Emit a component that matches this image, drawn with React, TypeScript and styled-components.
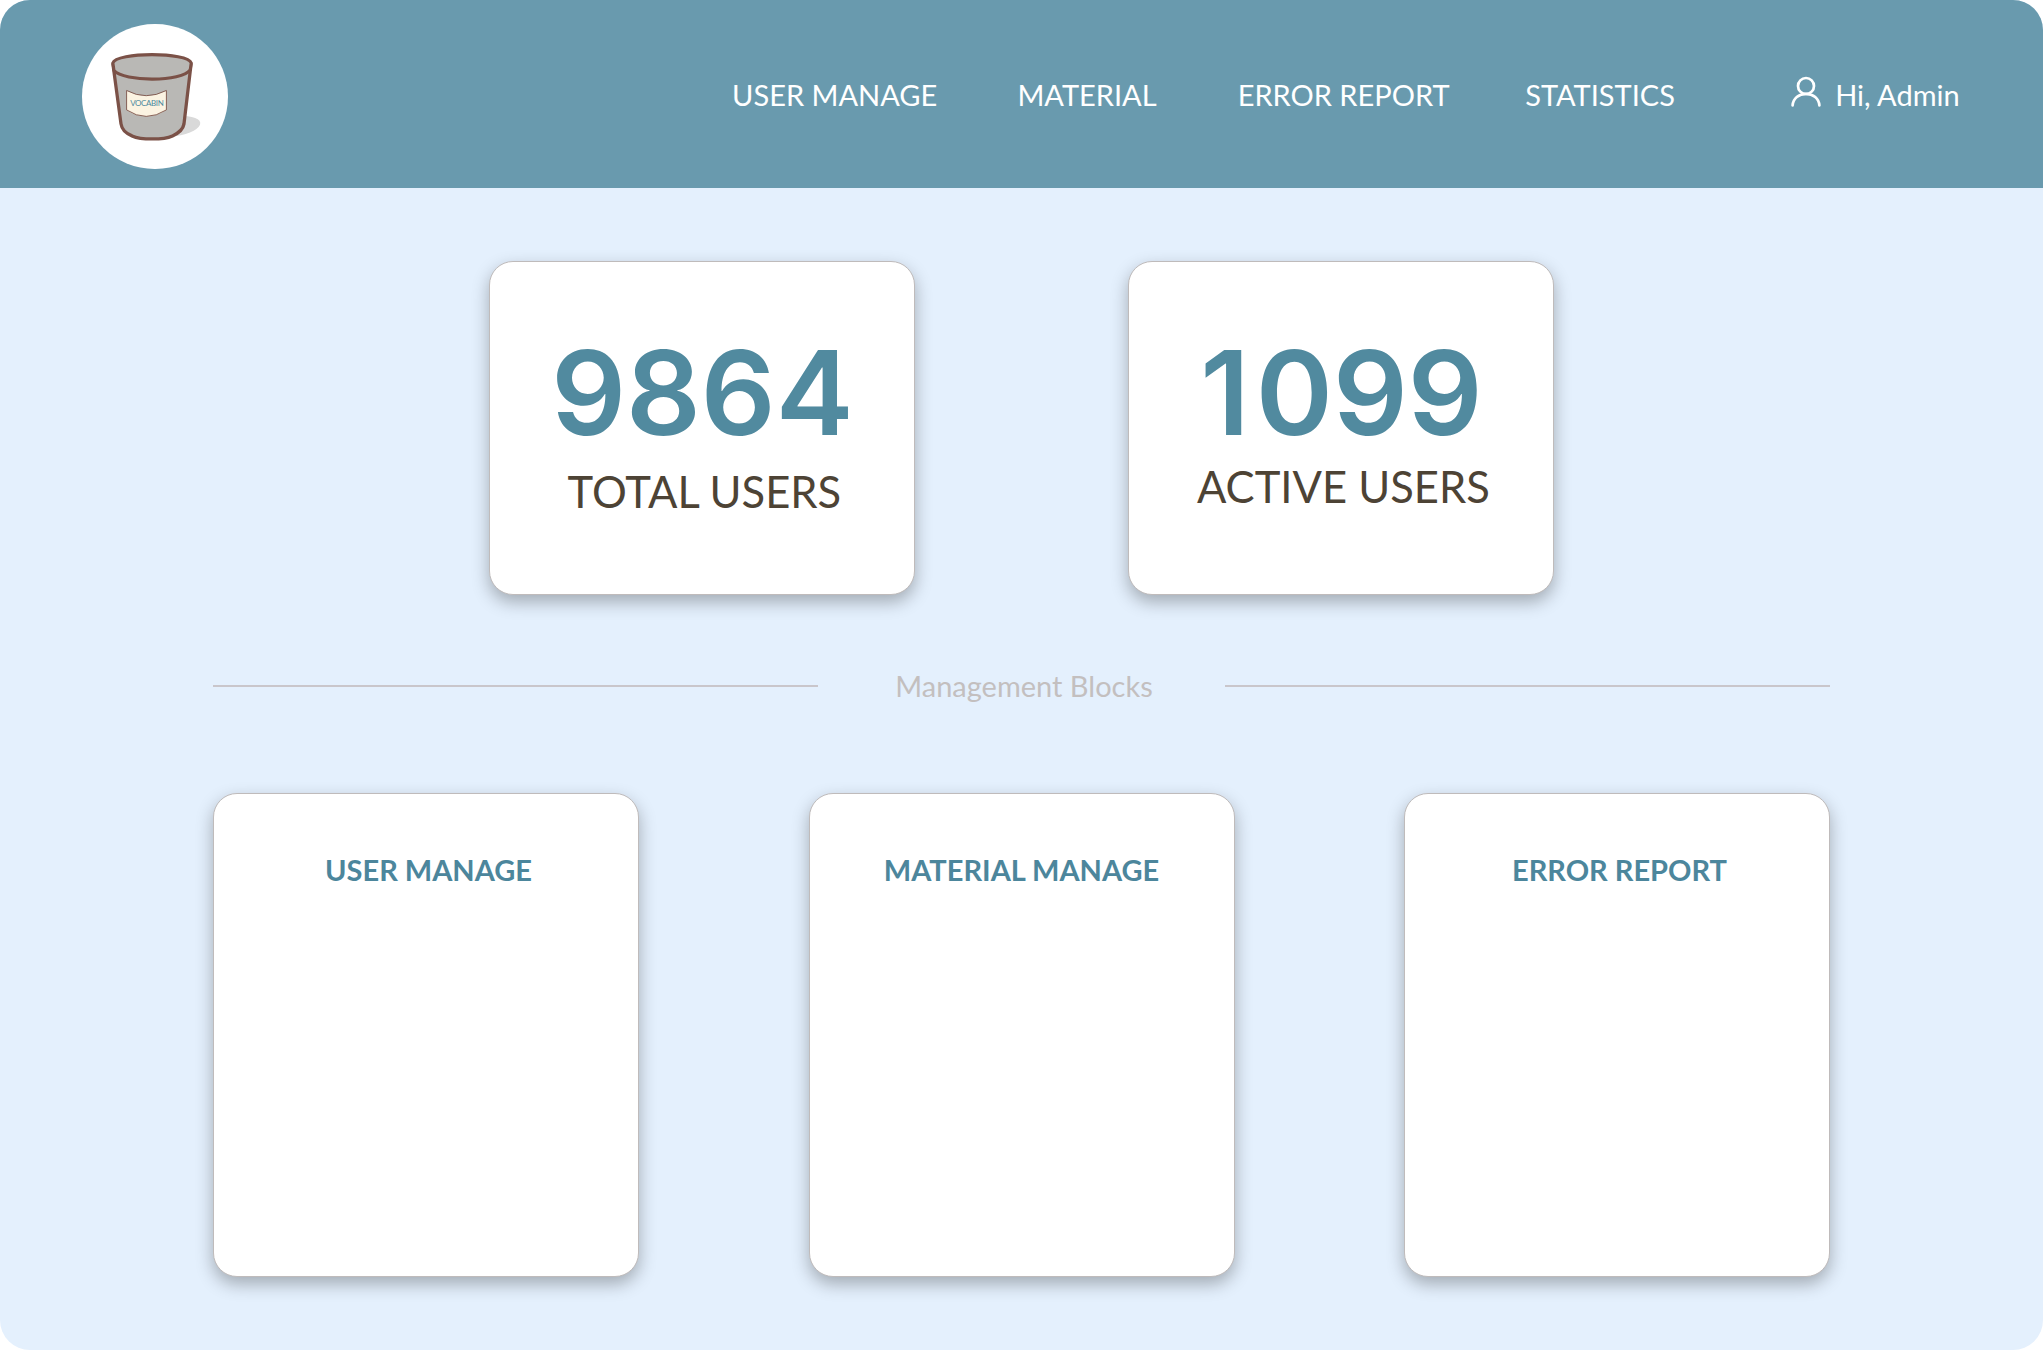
import React from "react";
import styled, { createGlobalStyle } from "styled-components";

const GlobalStyle = createGlobalStyle`
  *, *::before, *::after { box-sizing: border-box; }
  body { margin: 0; background: #fff; }
`;

const Page = styled.div`
  width: 2043px;
  height: 1350px;
  display: flex;
  flex-direction: column;
  background: #e4f0fd;
  border-radius: 30px;
  overflow: hidden;
  font-family: Lato, "Liberation Sans", sans-serif;
`;

const Header = styled.header`
  flex: none;
  height: 188.4px;
  display: flex;
  align-items: center;
  padding: 4px 0 0 82.3px;
  background: #699aae;
`;

const LogoLink = styled.a`
  width: 145.4px;
  height: 145.4px;
  border-radius: 50%;
  background: #fff;
  display: block;
`;

const Nav = styled.nav`
  display: grid;
  grid-template-columns: 285.3px 220.3px 287.5px 200px;
  margin-left: 504.4px;
`;

const NavItem = styled.a`
  color: #fff;
  font-size: 29px;
  line-height: 36px;
  margin: -1px 0 2px;
  white-space: nowrap;
`;

const Account = styled.div`
  display: flex;
  align-items: center;
  margin-left: 65px;
  gap: 13px;
`;

const UserIcon = styled.svg`
  width: 32px;
  height: 32px;
  margin-top: -9px;
`;

const Main = styled.main`
  flex: 1;
  display: flex;
  flex-direction: column;
  padding: 73px 213px 0;
`;

const Card = styled.section<{ $height: number }>`
  width: 426px;
  height: ${(p) => p.$height}px;
  display: flex;
  flex-direction: column;
  align-items: center;
  background: #fff;
  border: 1px solid #bfbbbb;
  border-radius: 24px;
  box-shadow: 0 7px 17px rgba(0, 0, 0, 0.29);
`;

const StatRow = styled.div`
  display: flex;
  gap: 213px;
  padding-left: 276.4px;
`;

const StatValue = styled.div`
  margin-top: 61px;
  font-family: Inter, sans-serif;
  font-size: 117px;
  font-weight: 600;
  line-height: 140px;
  color: #518a9f;
`;

const Digit = styled.span<{ $wide: boolean }>`
  letter-spacing: ${(p) => (p.$wide ? "6px" : "normal")};
`;

const StatLabel = styled.div<{ $top: number; $shift: number }>`
  margin-top: ${(p) => p.$top}px;
  padding-left: ${(p) => p.$shift}px;
  font-size: 43.5px;
  line-height: 52px;
  color: #4d4335;
  white-space: nowrap;
`;

const Divider = styled.div`
  display: flex;
  align-items: center;
  height: 40px;
  margin-top: 71.6px;
`;

const Rule = styled.div`
  width: 605px;
  height: 2px;
  background: #c9c6cb;
`;

const DividerLabel = styled.div`
  flex: 1;
  padding-left: 5px;
  text-align: center;
  font-size: 29px;
  line-height: 36px;
  color: #c3bfbf;
`;

const BlockRow = styled.div`
  display: flex;
  justify-content: space-between;
  margin-top: 87px;
`;

const BlockTitle = styled.h2<{ $shift: number }>`
  margin: 58px 0 0;
  padding-left: ${(p) => p.$shift}px;
  font-size: 29px;
  font-weight: 700;
  line-height: 36px;
  color: #4c869c;
  white-space: nowrap;
`;

const navItems = ["USER MANAGE", "MATERIAL", "ERROR REPORT", "STATISTICS"];

const stats = [
  { value: "9864", label: "TOTAL USERS", top: 2, shift: 4 },
  { value: "1099", label: "ACTIVE USERS", top: -3, shift: 4 },
];

const blocks = [
  { title: "USER MANAGE", shift: 5 },
  { title: "MATERIAL MANAGE", shift: 0 },
  { title: "ERROR REPORT", shift: 5 },
];

function Logo() {
  return (
    <svg width="145.4" height="145.4" viewBox="22 24.1 145.4 145.4">
      <ellipse cx="114.5" cy="126.5" rx="26" ry="9.8" fill="#d9d9d9" transform="rotate(-8 114.5 126.5)" />
      <path
        d="M52.9 64 L61 124 C62 131 67 134 72 136 C81 140 103 140.2 112.5 136 C118 133.5 123 130 124 124 L131.1 64 Z"
        fill="#b9b8b5"
        stroke="#7b5147"
        strokeWidth="3.3"
        strokeLinejoin="round"
      />
      <path
        d="M52.9 63 C56 52 128 52 131.2 63 L130.2 70 C122 82.2 64 82.2 54 70.7 Z"
        fill="#b9b8b5"
        stroke="#7b5147"
        strokeWidth="3.1"
        strokeLinejoin="round"
      />
      <path
        d="M66.6 90.6 Q86 101 106.4 90.6 V110 Q86 123 66.6 110 Z"
        fill="#fbf3e2"
        stroke="#7b5147"
        strokeWidth="0.9"
      />
      <text x="87" y="106.6" textAnchor="middle" fontFamily="Lato, sans-serif" fontSize="8" textLength="33.5" fill="#4c8a9f">
        VOCABIN
      </text>
    </svg>
  );
}

export default function App() {
  return (
    <>
      <GlobalStyle />
      <Page>
        <Header>
          <LogoLink>
            <Logo />
          </LogoLink>
          <Nav>
            {navItems.map((n) => (
              <NavItem key={n}>{n}</NavItem>
            ))}
          </Nav>
          <Account>
            <UserIcon viewBox="0 0 32 32" fill="none" stroke="#fff" strokeWidth="2.7" strokeLinecap="round">
              <circle cx="16" cy="10" r="8" />
              <path d="M2.6 29.3C3.2 22.5 8.7 17.8 16 17.8S28.8 22.5 29.4 29.3" />
            </UserIcon>
            <NavItem>Hi, Admin</NavItem>
          </Account>
        </Header>
        <Main>
          <StatRow>
            {stats.map((s) => (
              <Card key={s.label} $height={333.4}>
                <StatValue>
                  <Digit $wide={s.value[0] === "1"}>{s.value[0]}</Digit>
                  {s.value.slice(1)}
                </StatValue>
                <StatLabel $top={s.top} $shift={s.shift}>
                  {s.label}
                </StatLabel>
              </Card>
            ))}
          </StatRow>
          <Divider>
            <Rule />
            <DividerLabel>Management Blocks</DividerLabel>
            <Rule />
          </Divider>
          <BlockRow>
            {blocks.map((b) => (
              <Card key={b.title} $height={483.4}>
                <BlockTitle $shift={b.shift}>{b.title}</BlockTitle>
              </Card>
            ))}
          </BlockRow>
        </Main>
      </Page>
    </>
  );
}
